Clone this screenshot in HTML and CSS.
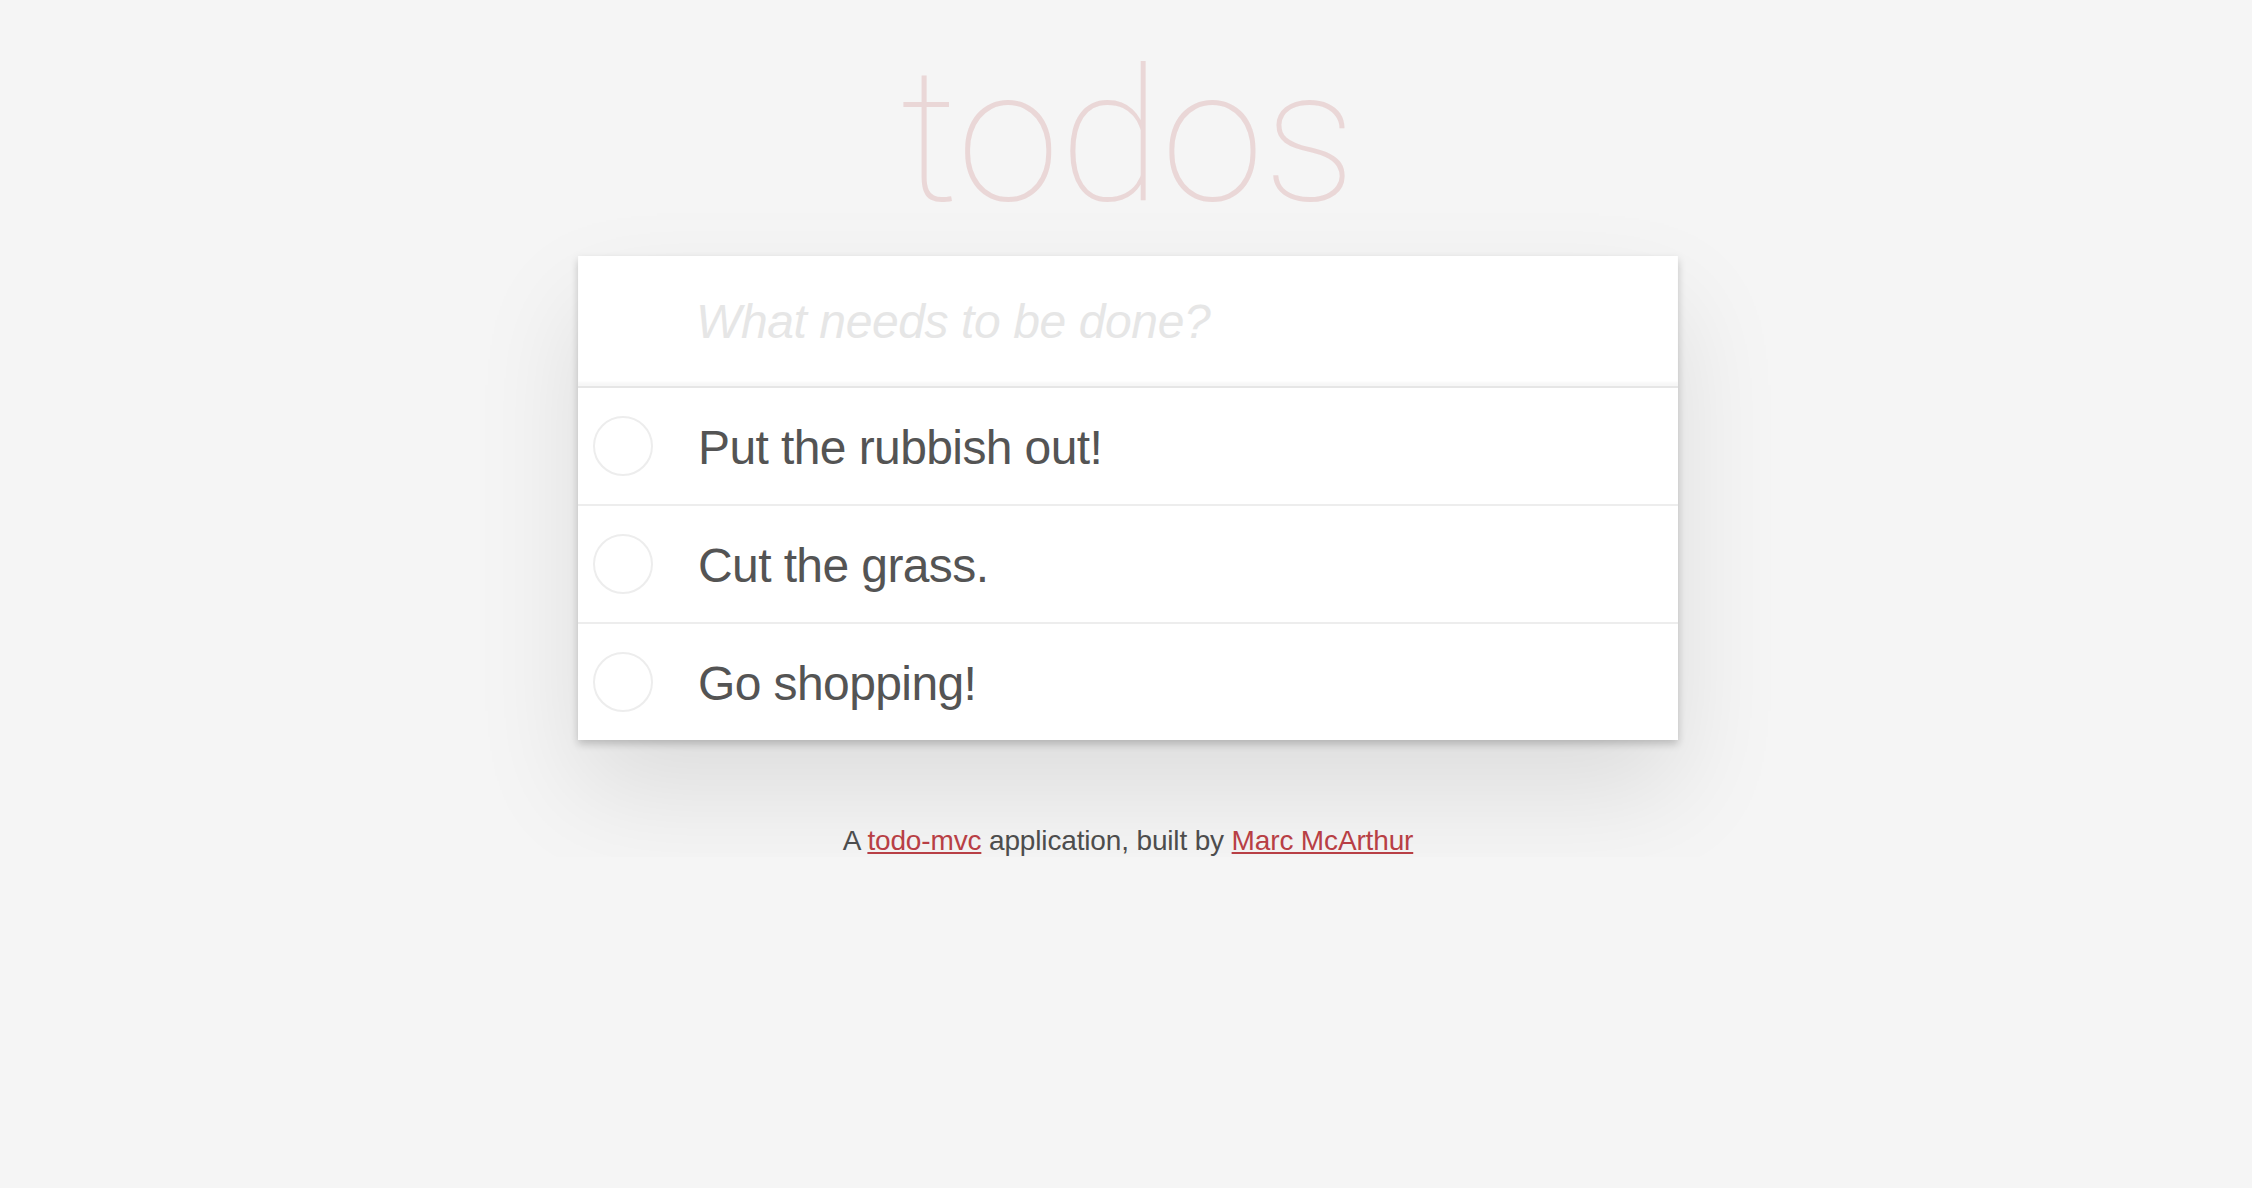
FILE: index.html
```html
<!DOCTYPE html>
<html lang="en">
<head>
<meta charset="utf-8">
<title>todos</title>
<link rel="stylesheet" href="styles.css">
</head>
<body>
<div class="page">
  <header class="header">
    <h1 class="title">todos</h1>
  </header>
  <section class="todoapp">
    <div class="new-todo">What needs to be done?</div>
    <ul class="todo-list">
      <li class="todo">
        <svg class="toggle" viewBox="0 0 60 60" width="60" height="60"><circle cx="30" cy="30" r="29" fill="none" stroke="#ededed" stroke-width="2"/></svg>
        <span class="label">Put the rubbish out!</span>
      </li>
      <li class="todo">
        <svg class="toggle" viewBox="0 0 60 60" width="60" height="60"><circle cx="30" cy="30" r="29" fill="none" stroke="#ededed" stroke-width="2"/></svg>
        <span class="label">Cut the grass.</span>
      </li>
      <li class="todo">
        <svg class="toggle" viewBox="0 0 60 60" width="60" height="60"><circle cx="30" cy="30" r="29" fill="none" stroke="#ededed" stroke-width="2"/></svg>
        <span class="label">Go shopping!</span>
      </li>
    </ul>
  </section>
  <footer class="info">A <a href="#">todo-mvc</a> application, built by <a href="#">Marc McArthur</a></footer>
</div>
</body>
</html>
```
FILE: styles.css
```css
html, body {
  margin: 0;
  padding: 0;
  background: #f5f5f5;
}
body {
  font-family: "Liberation Sans", Arial, sans-serif;
  color: #4d4d4d;
}
.page {
  width: 1100px;
  margin: 0 auto;
  padding-left: 4px;
}
.header {
  height: 256px;
  display: flex;
  justify-content: center;
}
.title {
  margin: 0;
  padding-top: 43px;
  font-family: Roboto, "Liberation Sans", sans-serif;
  font-weight: 100;
  font-size: 186px;
  line-height: 186px;
  color: rgba(175, 47, 47, 0.15);
  text-align: center;
}
.todoapp {
  background: #fff;
  box-shadow: 0 4px 8px 0 rgba(0, 0, 0, 0.2), 0 50px 100px 0 rgba(0, 0, 0, 0.1);
}
.new-todo {
  height: 130px;
  box-sizing: border-box;
  padding-left: 118px;
  display: flex;
  align-items: center;
  font-size: 48px;
  font-style: italic;
  color: #e6e6e6;
  box-shadow: inset 0 -4px 2px rgba(0, 0, 0, 0.03);
  letter-spacing: -0.4px;
}
.todo-list {
  list-style: none;
  margin: 0;
  padding: 0;
  border-top: 2px solid #e6e6e6;
}
.todo {
  height: 116px;
  display: flex;
  align-items: center;
  padding-left: 15px;
  border-bottom: 2px solid #ededed;
}
.todo:last-child {
  border-bottom: none;
}
.toggle {
  flex: none;
  display: block;
}
.label {
  margin-left: 45px;
  padding-top: 2px;
  font-size: 48px;
  color: #545454;
  letter-spacing: -0.6px;
}
.info {
  margin-top: 85px;
  text-align: center;
  font-size: 28px;
  color: #4d4d4d;
  letter-spacing: -0.15px;
}
.info a {
  color: #b83f45;
  text-decoration: underline;
}
```
